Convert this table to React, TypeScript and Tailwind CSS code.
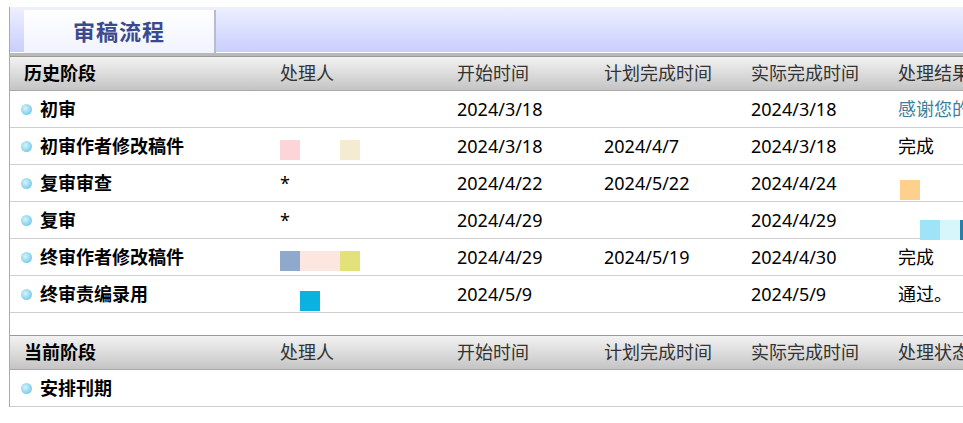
const cols = "grid grid-cols-[256px_177px_147px_147px_147px_1fr] items-center pl-[14px]";

interface Row {
  stage: string;
  handler: string;
  start: string;
  plan: string;
  actual: string;
  result: string;
  resultClass?: string;
}

const history: Row[] = [
  { stage: "初审", handler: "", start: "2024/3/18", plan: "", actual: "2024/3/18", result: "感谢您的", resultClass: "text-[#3f7f9c]" },
  { stage: "初审作者修改稿件", handler: "", start: "2024/3/18", plan: "2024/4/7", actual: "2024/3/18", result: "完成" },
  { stage: "复审审查", handler: "*", start: "2024/4/22", plan: "2024/5/22", actual: "2024/4/24", result: "" },
  { stage: "复审", handler: "*", start: "2024/4/29", plan: "", actual: "2024/4/29", result: "" },
  { stage: "终审作者修改稿件", handler: "", start: "2024/4/29", plan: "2024/5/19", actual: "2024/4/30", result: "完成" },
  { stage: "终审责编录用", handler: "", start: "2024/5/9", plan: "", actual: "2024/5/9", result: "通过。" },
];

function Bullet() {
  return (
    <span className="ml-[-3px] mr-[8px] inline-block h-[11px] w-[11px] shrink-0 rounded-full bg-[radial-gradient(circle_at_40%_40%,#d8f3fb_0%,#8fd6ee_55%,#5cb8dc_100%)]" />
  );
}

function HeaderRow({ title, last }: { title: string; last: string }) {
  return (
    <div
      className={`${cols} h-[35px] border-t border-b border-t-[#9a9a9a] border-b-[#a8a8a8] bg-gradient-to-b from-[#f2f2f2] via-[#dcdcdc] to-[#c4c4c4] text-[18px] text-[#333]`}
    >
      <span className="font-bold text-black">{title}</span>
      <span>处理人</span>
      <span>开始时间</span>
      <span>计划完成时间</span>
      <span>实际完成时间</span>
      <span className="whitespace-nowrap">{last}</span>
    </div>
  );
}

function Swatch({ color }: { color: string }) {
  return <span className={`inline-block h-[20px] w-[20px] ${color}`} />;
}

function Handler({ index, text }: { index: number; text: string }) {
  if (index === 1)
    return (
      <span className="flex translate-y-[4px]">
        <Swatch color="bg-[#fcd5d8]" />
        <span className="w-[40px]" />
        <Swatch color="bg-[#f4ebd3]" />
      </span>
    );
  if (index === 4)
    return (
      <span className="flex translate-y-[4px]">
        <Swatch color="bg-[#8ea9cb]" />
        <span className="inline-block h-[20px] w-[40px] bg-[#fde6df]" />
        <Swatch color="bg-[#e3e27a]" />
      </span>
    );
  if (index === 5)
    return (
      <span className="flex translate-y-[7px] pl-[20px]">
        <Swatch color="bg-[#0ab3df]" />
      </span>
    );
  return <span>{text}</span>;
}

export default function App() {
  return (
    <div
      className="relative h-[423px] w-[963px] overflow-hidden bg-white pt-[7px] text-[18px] text-black"
      style={{ fontFamily: '"Noto Sans", "Noto Sans CJK SC", sans-serif' }}
    >
      <div className="ml-[9px] border-l border-[#a9a9a9]">
        {/* tab strip */}
        <div className="flex h-[49px] items-end border-b-[3px] border-b-[#b9b9b9] bg-gradient-to-b from-[#eef0fe] to-[#c8cdfd] pl-[14px] shadow-[inset_0_-1px_0_#ffffff]">
          <div className="flex h-[43px] w-[192px] items-center justify-center border-r-2 border-r-[#b8bccf] bg-gradient-to-b from-white to-[#f1f3fe] text-[22px] font-bold tracking-[1px] text-[#3b4a8e]">
            审稿流程
          </div>
        </div>

        <HeaderRow title="历史阶段" last="处理结果" />

        {history.map((r, i) => (
          <div key={r.stage} className={`${cols} h-[37px] border-b border-[#cfcfcf]`}>
            <span className="flex items-center font-bold">
              <Bullet />
              {r.stage}
            </span>
            <Handler index={i} text={r.handler} />
            <span>{r.start}</span>
            <span>{r.plan}</span>
            <span>{r.actual}</span>
            <span className={`whitespace-nowrap ${r.resultClass ?? ""}`}>{r.result}</span>
          </div>
        ))}

        <div className="h-[22px]" />

        <HeaderRow title="当前阶段" last="处理状态" />

        <div className={`${cols} h-[37px] border-b border-[#cfcfcf]`}>
          <span className="flex items-center font-bold">
            <Bullet />
            安排刊期
          </span>
        </div>
      </div>

      {/* redaction patches on the right */}
      <span className="absolute left-[900px] top-[180px] h-[20px] w-[20px] bg-[#fdd08e]" />
      <span className="absolute left-[920px] top-[220px] h-[20px] w-[20px] bg-[#9ee4f6]" />
      <span className="absolute left-[940px] top-[220px] h-[20px] w-[20px] bg-[#d7f6fb]" />
      <span className="absolute left-[960px] top-[220px] h-[20px] w-[3px] bg-[#2a7ea8]" />
    </div>
  );
}
